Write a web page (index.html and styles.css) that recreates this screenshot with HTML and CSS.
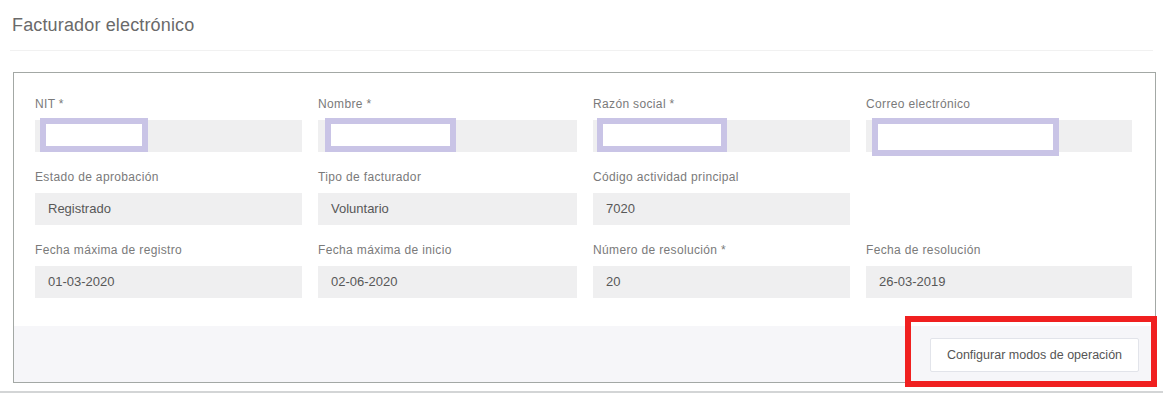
FILE: index.html
```html
<!DOCTYPE html>
<html lang="es">
<head>
<meta charset="utf-8">
<title>Facturador electrónico</title>
<link rel="stylesheet" href="styles.css">
</head>
<body>
<div class="page">
  <div class="header">Facturador electrónico</div>
  <div class="panel-wrap">
    <div class="panel">
      <div class="fields">
        <div class="field">
          <div class="label">NIT *</div>
          <div class="input"><span class="redact r1"></span></div>
        </div>
        <div class="field">
          <div class="label">Nombre *</div>
          <div class="input"><span class="redact r2"></span></div>
        </div>
        <div class="field">
          <div class="label">Razón social *</div>
          <div class="input"><span class="redact r3"></span></div>
        </div>
        <div class="field">
          <div class="label">Correo electrónico</div>
          <div class="input"><span class="redact r4"></span></div>
        </div>

        <div class="field">
          <div class="label">Estado de aprobación</div>
          <div class="input">Registrado</div>
        </div>
        <div class="field">
          <div class="label">Tipo de facturador</div>
          <div class="input">Voluntario</div>
        </div>
        <div class="field">
          <div class="label">Código actividad principal</div>
          <div class="input">7020</div>
        </div>
        <div class="field"></div>

        <div class="field">
          <div class="label">Fecha máxima de registro</div>
          <div class="input">01-03-2020</div>
        </div>
        <div class="field">
          <div class="label">Fecha máxima de inicio</div>
          <div class="input">02-06-2020</div>
        </div>
        <div class="field">
          <div class="label">Número de resolución *</div>
          <div class="input">20</div>
        </div>
        <div class="field">
          <div class="label">Fecha de resolución</div>
          <div class="input">26-03-2019</div>
        </div>
      </div>
      <div class="footer">
        <button class="btn" type="button">Configurar modos de operación</button>
        <span class="highlight"></span>
      </div>
    </div>
  </div>
  <div class="bottom-line"></div>
</div>
</body>
</html>
```

FILE: styles.css
```css
html, body {
  margin: 0;
  padding: 0;
  background: #ffffff;
}

body {
  font-family: "Liberation Sans", Arial, sans-serif;
  color: #666;
}

.page {
  width: 1163px;
  height: 394px;
  overflow: hidden;
}

.header {
  height: 51px;
  box-sizing: border-box;
  padding: 14px 0 0 2px;
  margin: 0 10px;
  font-size: 18px;
  line-height: 22px;
  letter-spacing: 0.15px;
  color: #6a6a6a;
  border-bottom: 1px solid #f1f1f1;
}

.panel-wrap {
  padding: 21px 7px 0 13px;
}

.panel {
  border: 1px solid #a3a8a5;
  background: #fff;
}

.fields {
  display: grid;
  grid-template-columns: 267px 259px 257px 266px;
  column-gap: 16px;
  row-gap: 17px;
  padding: 23px 21px 28px 21px;
}

.label {
  font-size: 12px;
  line-height: 16px;
  letter-spacing: 0.35px;
  color: #7a7a7a;
  margin-bottom: 8px;
  white-space: nowrap;
}

.input {
  position: relative;
  height: 32px;
  background: #efeff0;
  font-size: 13px;
  line-height: 32px;
  color: #585858;
  padding-left: 13px;
}

.redact {
  position: absolute;
  top: -2px;
  height: 22px;
  border: 6px solid #c9c4e6;
  background: #fff;
}

.r1 { left: 5px; width: 96px; }
.r2 { left: 7px; width: 119px; }
.r3 { left: 4px; width: 118px; }
.r4 { left: 6px; width: 175px; height: 26px; }

.footer {
  position: relative;
  height: 56px;
  background: #f6f6f9;
  display: flex;
  justify-content: flex-end;
  align-items: center;
  padding-right: 16px;
}

.btn {
  height: 34px;
  width: 209px;
  background: #fff;
  border: 1px solid #e2e4ea;
  border-radius: 2px;
  font-family: "Liberation Sans", Arial, sans-serif;
  font-size: 12.5px;
  color: #555;
  padding: 0;
  margin-top: 1px;
}

.highlight {
  position: absolute;
  right: -2px;
  top: -10px;
  width: 240px;
  height: 59px;
  border: 6px solid #f02020;
  pointer-events: none;
}

.bottom-line {
  margin-top: 8px;
  height: 2px;
  background: #d3d5d6;
}
```
